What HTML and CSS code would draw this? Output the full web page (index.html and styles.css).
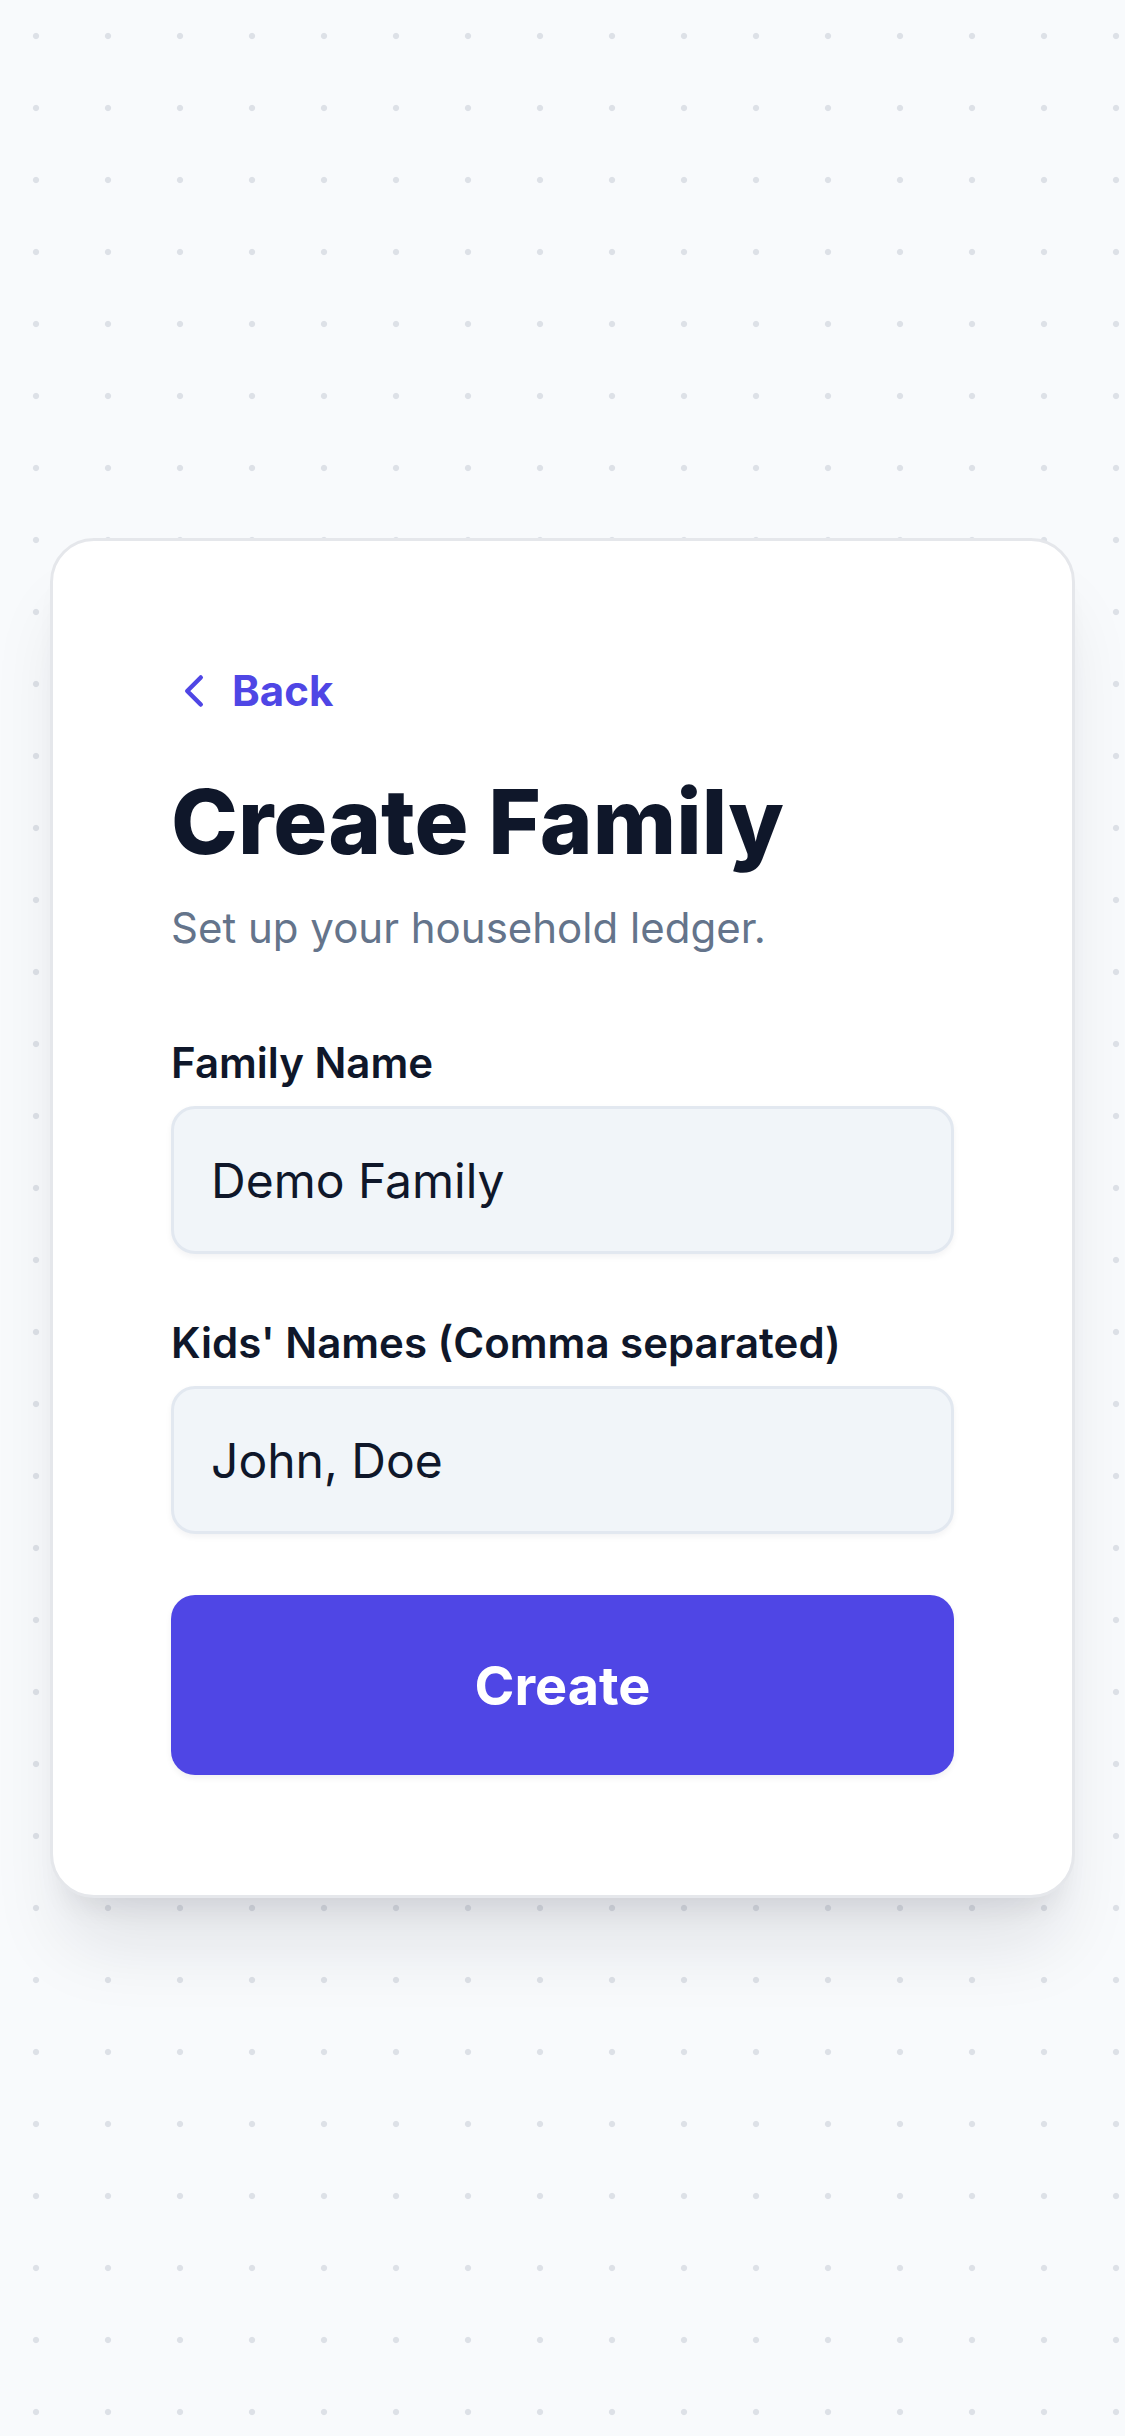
FILE: index.html
```html
<!DOCTYPE html>
<html lang="en">
<head>
<meta charset="utf-8">
<title>Create Family</title>
<link rel="stylesheet" href="styles.css">
</head>
<body>
<main class="page">
  <section class="card">
    <a class="back" href="#">
      <svg class="back-icon" viewBox="0 0 24 24" fill="none" stroke="currentColor" stroke-width="2" stroke-linecap="round" stroke-linejoin="round"><path d="m15 18-6-6 6-6"/></svg>
      <span>Back</span>
    </a>
    <h1 class="title">Create Family</h1>
    <p class="subtitle">Set up your household ledger.</p>
    <form class="form">
      <div class="field">
        <label class="label" for="family">Family Name</label>
        <input class="input" id="family" type="text" value="Demo Family">
      </div>
      <div class="field field-next">
        <label class="label" for="kids">Kids' Names (Comma separated)</label>
        <input class="input" id="kids" type="text" value="John, Doe">
      </div>
      <button class="submit" type="button">Create</button>
    </form>
  </section>
</main>
</body>
</html>
```

FILE: styles.css
```css
* { box-sizing: border-box; }

html, body {
  margin: 0;
  padding: 0;
}

body {
  font-family: Inter, "Noto Sans", "Liberation Sans", sans-serif;
  background-color: #f8fafc;
  background-image: radial-gradient(circle at center, #dde1e7 0, #dde1e7 2.6px, rgba(221,225,231,0) 3.6px);
  background-size: 72px 72px;
  color: #0f172a;
}

.page {
  min-height: 100vh;
  display: flex;
  flex-direction: column;
  justify-content: center;
  padding: 0 50px;
}

.card {
  background: #ffffff;
  border: 3px solid #e5e7eb;
  border-radius: 44px;
  padding: 120px 118px;
  box-shadow: 0 60px 75px -15px rgba(15, 23, 42, 0.10), 0 24px 30px -18px rgba(15, 23, 42, 0.10);
  display: flex;
  flex-direction: column;
}

.back {
  display: flex;
  align-items: center;
  gap: 11px;
  height: 60px;
  margin-left: -4px;
  color: #4f46e5;
  text-decoration: none;
  font-size: 42px;
  font-weight: 700;
  line-height: 60px;
  align-self: flex-start;
}

.back-icon {
  width: 54px;
  height: 54px;
  flex: none;
}

.title {
  margin: 47px 0 0;
  font-size: 90px;
  line-height: 108px;
  font-weight: 800;
  color: #0f172a;
  letter-spacing: 0;
}

.subtitle {
  margin: 22px 0 0;
  font-size: 42px;
  line-height: 60px;
  color: #64748b;
  font-weight: 400;
}

.form {
  margin: 75px 0 0;
  display: flex;
  flex-direction: column;
}

.field {
  display: flex;
  flex-direction: column;
}

.field-next {
  margin-top: 59px;
}

.label {
  font-size: 42px;
  line-height: 60px;
  font-weight: 600;
  color: #0f172a;
  margin-bottom: 13px;
}

.input {
  display: block;
  width: 100%;
  height: 148px;
  padding: 0 37px;
  border: 3px solid #e2e8f0;
  border-radius: 24px;
  background: #f1f5f9;
  font-family: Inter, "Noto Sans", "Liberation Sans", sans-serif;
  font-size: 48px;
  line-height: 72px;
  color: #0f172a;
  box-shadow: 0 3px 6px rgba(15, 23, 42, 0.05);
  outline: none;
}

.submit {
  margin-top: 61px;
  height: 180px;
  width: 100%;
  border: 0;
  border-radius: 24px;
  background: #4f46e5;
  color: #ffffff;
  font-family: Inter, "Noto Sans", "Liberation Sans", sans-serif;
  font-size: 54px;
  font-weight: 700;
  box-shadow: 0 3px 6px rgba(15, 23, 42, 0.06);
  cursor: pointer;
}
```
